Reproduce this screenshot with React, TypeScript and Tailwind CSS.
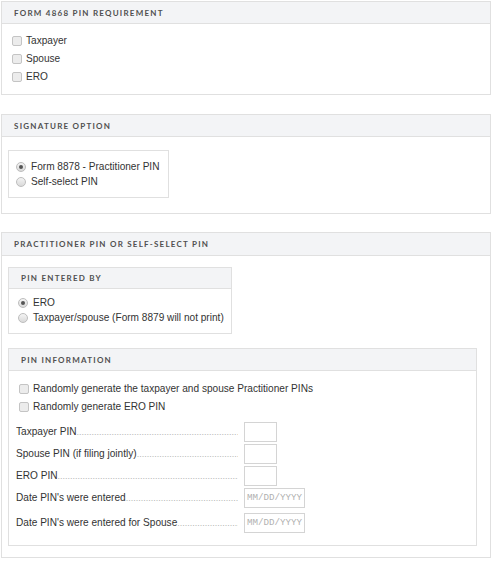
import React from "react";

const Check = () => (
  <span className="inline-block w-[10px] h-[10px] rounded-[2px] border border-[#c4c4c4] bg-[#ececec] shrink-0" />
);

const Radio = ({ on }: { on?: boolean }) => (
  <span className="w-[10px] h-[10px] rounded-full border border-[#bdbdbd] bg-[linear-gradient(#f4f4f4,#d9d9d9)] shrink-0 flex items-center justify-center">
    {on && <span className="w-[4px] h-[4px] rounded-full bg-[#555]" />}
  </span>
);

const Header = ({ children, h = "h-[22px]", pl = "pl-[12px]" }: { children: React.ReactNode; h?: string; pl?: string }) => (
  <div className={`${h} ${pl} flex items-center bg-[#f3f4f6] border-b border-[#e0e0e0] font-['Lato'] font-bold text-[8px] tracking-[0.155em] text-[#505050] uppercase whitespace-nowrap`}>
    {children}
  </div>
);

const dots = ".".repeat(200);

const Row = ({ label, wide, h }: { label: string; wide?: boolean; h: string }) => (
  <div className={`flex items-center ${h}`}>
    <div className="w-[222px] flex items-end overflow-hidden whitespace-nowrap">
      <span>{label}</span>
      <span className="flex-1 overflow-hidden text-[#b4b4b4] text-[9px]">{dots}</span>
    </div>
    <div className="ml-[6px]">
      {wide ? (
        <div className="w-[61px] h-[20px] border border-[#d4d4d4] flex items-center pl-[2px] font-['Liberation_Mono'] text-[9.2px] text-[#b0b0b0] whitespace-nowrap overflow-hidden">
          MM/DD/YYYY
        </div>
      ) : (
        <div className="w-[33px] h-[20px] border border-[#d4d4d4]" />
      )}
    </div>
  </div>
);

export default function App() {
  return (
    <div className="w-[494px] h-[563px] bg-white pt-px pl-px font-['Liberation_Sans'] text-[10.1px] text-[#333] whitespace-nowrap">
      {/* Panel 1 */}
      <section className="w-[490px] border border-[#e0e0e0]">
        <Header>Form 4868 PIN Requirement</Header>
        <div className="pt-[8px] pb-[8px] pl-[10px]">
          {["Taxpayer", "Spouse", "ERO"].map((t) => (
            <div key={t} className="h-[18px] flex items-center gap-[4px]">
              <Check />
              <span>{t}</span>
            </div>
          ))}
        </div>
      </section>

      {/* Panel 2 */}
      <section className="w-[490px] border border-[#e0e0e0] mt-[19px]">
        <Header>Signature Option</Header>
        <div className="pt-[13px] pb-[15px] pl-[6px]">
          <div className="w-[161px] border border-[#e0e0e0] pt-[8px] pb-[8px] pl-[7px]">
            <div className="h-[15px] flex items-center gap-[5px]">
              <Radio on />
              <span>Form 8878 - Practitioner PIN</span>
            </div>
            <div className="h-[15px] flex items-center gap-[5px]">
              <Radio />
              <span>Self-select PIN</span>
            </div>
          </div>
        </div>
      </section>

      {/* Panel 3 */}
      <section className="w-[490px] border border-[#e0e0e0] mt-[18px]">
        <Header h="h-[23px]">Practitioner PIN or Self-Select PIN</Header>
        <div className="pt-[11px] pb-[11px] pl-[6px]">
          <div className="w-[224px] border border-[#e0e0e0]">
            <Header pl="pl-[12px]" h="h-[21px]">PIN Entered By</Header>
            <div className="pt-[6px] pb-[8px] pl-[9px]">
              <div className="h-[15px] flex items-center gap-[5px]">
                <Radio on />
                <span>ERO</span>
              </div>
              <div className="h-[15px] flex items-center gap-[5px]">
                <Radio />
                <span>Taxpayer/spouse (Form 8879 will not print)</span>
              </div>
            </div>
          </div>

          <div className="w-[469px] border border-[#e0e0e0] mt-[14px]">
            <Header pl="pl-[12px]" h="h-[22px]">PIN Information</Header>
            <div className="pt-[9px] pb-[11px] pl-[7px]">
              <div className="pl-[3px]">
                <div className="h-[18px] flex items-center gap-[4px]">
                  <Check />
                  <span>Randomly generate the taxpayer and spouse Practitioner PINs</span>
                </div>
                <div className="h-[18px] flex items-center gap-[4px]">
                  <Check />
                  <span>Randomly generate ERO PIN</span>
                </div>
              </div>
              <div className="mt-[5px]">
                <Row label="Taxpayer PIN" h="h-[22px]" />
                <Row label="Spouse PIN (if filing jointly)" h="h-[22px]" />
                <Row label="ERO PIN" h="h-[22px]" />
                <Row label="Date PIN's were entered" wide h="h-[22px]" />
                <div className="h-[3px]" />
                <Row label="Date PIN's were entered for Spouse" wide h="h-[22px]" />
              </div>
            </div>
          </div>
        </div>
      </section>
    </div>
  );
}
